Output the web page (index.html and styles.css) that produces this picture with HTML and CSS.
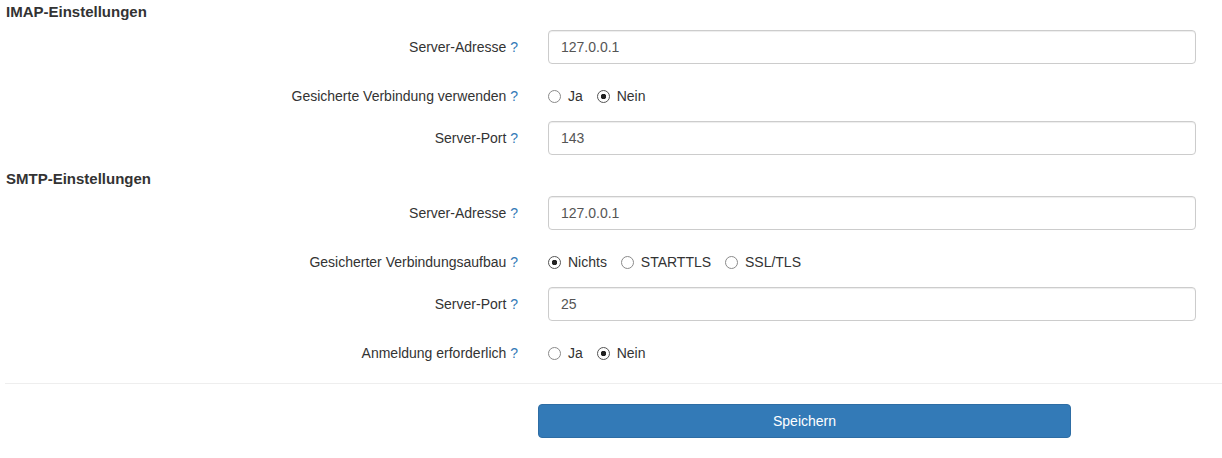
FILE: index.html
```html
<!DOCTYPE html>
<html lang="de">
<head>
    <meta charset="UTF-8">
    <meta name="viewport" content="width=device-width, initial-scale=1.0">
    <title>E-Mail-Einstellungen</title>
    <link rel="stylesheet" href="styles.css">
</head>
<body>
    <form class="settings-form">
        <!-- IMAP -->
        <h4 class="section-title first">IMAP-Einstellungen</h4>

        <div class="form-group">
            <label class="control-label">Server-Adresse <a href="#" class="help">?</a></label>
            <div class="control">
                <input type="text" class="form-control" value="127.0.0.1">
            </div>
        </div>

        <div class="form-group">
            <label class="control-label">Gesicherte Verbindung verwenden <a href="#" class="help">?</a></label>
            <div class="control radios">
                <label class="radio-inline"><input type="radio" name="imap_ssl"> Ja</label>
                <label class="radio-inline"><input type="radio" name="imap_ssl" checked> Nein</label>
            </div>
        </div>

        <div class="form-group">
            <label class="control-label">Server-Port <a href="#" class="help">?</a></label>
            <div class="control">
                <input type="text" class="form-control" value="143">
            </div>
        </div>

        <!-- SMTP -->
        <h4 class="section-title">SMTP-Einstellungen</h4>

        <div class="form-group">
            <label class="control-label">Server-Adresse <a href="#" class="help">?</a></label>
            <div class="control">
                <input type="text" class="form-control" value="127.0.0.1">
            </div>
        </div>

        <div class="form-group">
            <label class="control-label">Gesicherter Verbindungsaufbau <a href="#" class="help">?</a></label>
            <div class="control radios">
                <label class="radio-inline"><input type="radio" name="smtp_secure" checked> Nichts</label>
                <label class="radio-inline"><input type="radio" name="smtp_secure"> STARTTLS</label>
                <label class="radio-inline"><input type="radio" name="smtp_secure"> SSL/TLS</label>
            </div>
        </div>

        <div class="form-group">
            <label class="control-label">Server-Port <a href="#" class="help">?</a></label>
            <div class="control">
                <input type="text" class="form-control" value="25">
            </div>
        </div>

        <div class="form-group">
            <label class="control-label">Anmeldung erforderlich <a href="#" class="help">?</a></label>
            <div class="control radios">
                <label class="radio-inline"><input type="radio" name="smtp_auth"> Ja</label>
                <label class="radio-inline"><input type="radio" name="smtp_auth" checked> Nein</label>
            </div>
        </div>

        <hr class="divider">

        <div class="actions">
            <button type="submit" class="btn-primary">Speichern</button>
        </div>
    </form>
</body>
</html>
```

FILE: styles.css
```css
body {
    font-family: "Liberation Sans", Arial, sans-serif;
    font-size: 14px;
    line-height: 20px;
    color: #333;
    background-color: #fff;
    margin: 0;
    padding: 0;
}

.settings-form {
    padding: 0 0 0 5px;
}

.section-title {
    font-size: 15px;
    font-weight: bold;
    line-height: 18px;
    margin: 0 0 8px 1px;
    color: #333;
}

.section-title.first {
    margin-top: 3px;
    margin-bottom: 9px;
}

.form-group {
    display: flex;
    margin-bottom: 15px;
}

.control-label {
    width: 513px;
    flex-shrink: 0;
    text-align: right;
    padding-top: 7px;
    box-sizing: border-box;
}

.help {
    color: #337ab7;
    text-decoration: none;
}

.control {
    width: 648px;
    margin-left: 30px;
}

.form-control {
    display: block;
    width: 100%;
    height: 34px;
    padding: 6px 12px;
    box-sizing: border-box;
    font-family: inherit;
    font-size: 14px;
    color: #555;
    background-color: #fff;
    border: 1px solid #ccc;
    border-radius: 4px;
    box-shadow: inset 0 1px 1px rgba(0, 0, 0, 0.075);
}

.radios {
    padding-top: 7px;
    min-height: 20px;
}

.radio-inline {
    display: inline-block;
    position: relative;
    padding-left: 20px;
    margin-right: 10px;
    cursor: pointer;
}

.radio-inline input[type="radio"] {
    -webkit-appearance: none;
    appearance: none;
    position: absolute;
    left: 0;
    top: 4px;
    width: 13px;
    height: 13px;
    margin: 0;
    border: 1px solid #8a8a8a;
    border-radius: 50%;
    background-color: #fff;
    box-sizing: border-box;
}

.radio-inline input[type="radio"]:checked {
    background: radial-gradient(circle, #222 0, #222 2.5px, #fff 3px);
    border-color: #555;
}

.divider {
    border: 0;
    border-top: 1px solid #eee;
    margin: 20px 0;
}

.actions {
    padding-left: 533px;
}

.btn-primary {
    display: block;
    width: 533px;
    height: 34px;
    font-family: inherit;
    font-size: 14px;
    color: #fff;
    background-color: #337ab7;
    border: 1px solid #2e6da4;
    border-radius: 4px;
    cursor: pointer;
}
```
